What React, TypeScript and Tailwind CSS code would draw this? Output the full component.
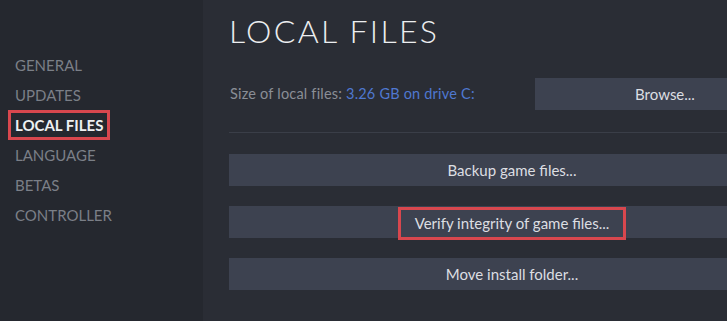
import React from "react";

const navItems = ["GENERAL", "UPDATES", "LOCAL FILES", "LANGUAGE", "BETAS", "CONTROLLER"];

function ActionButton({ label, highlight }: { label: string; highlight?: boolean }) {
  return (
    <div className="flex h-[32px] w-full items-center justify-center bg-[#3d4250] text-[15px] text-[#dcdee2]">
      {highlight ? (
        <span className="flex h-[33px] translate-y-[1px] items-center border-[3px] border-[#d8474e] px-[14px]">
          {label}
        </span>
      ) : (
        <span>{label}</span>
      )}
    </div>
  );
}

export default function App() {
  return (
    <div
      className="flex h-[321px] w-[727px] overflow-hidden bg-[#2a2d35]"
      style={{ fontFamily: "Lato, 'Open Sans', sans-serif" }}
    >
      <div className="flex w-[203px] shrink-0 flex-col bg-[#25282f] pt-[50px]">
        {navItems.map((item) =>
          item === "LOCAL FILES" ? (
            <div key={item} className="flex h-[30px] items-center pl-[8px]">
              <span className="flex h-[30px] items-center border-[3px] border-[#d8474e] px-[4px] text-[15px] font-bold text-[#eef0f2]">
                {item}
              </span>
            </div>
          ) : (
            <div key={item} className="flex h-[30px] items-center pl-[15px] text-[15px] text-[#7b7f87]">
              {item}
            </div>
          )
        )}
      </div>
      <div className="flex shrink-0 flex-col pl-[26px]">
        <div className="w-[566px]">
          <div className="pt-[12px] text-[32px] font-light leading-[38px] tracking-[2.3px] text-[#eceef0]">
            LOCAL FILES
          </div>
          <div className="mt-[28px] flex items-center">
            <div className="flex-1 pl-[1px] text-[14.5px] tracking-[0.2px] text-[#8a8e96]">
              Size of local files: <span className="text-[#4f78d0]">3.26 GB on drive C:</span>
            </div>
            <div className="flex h-[32px] w-[260px] items-center justify-center bg-[#3d4250] text-[15px] text-[#dcdee2]">
              Browse...
            </div>
          </div>
          <div className="mt-[22px] h-px w-full bg-[#3a3e48]" />
          <div className="mt-[21px] flex flex-col gap-[20px]">
            <ActionButton label="Backup game files..." />
            <ActionButton label="Verify integrity of game files..." highlight />
            <ActionButton label="Move install folder..." />
          </div>
        </div>
      </div>
    </div>
  );
}
